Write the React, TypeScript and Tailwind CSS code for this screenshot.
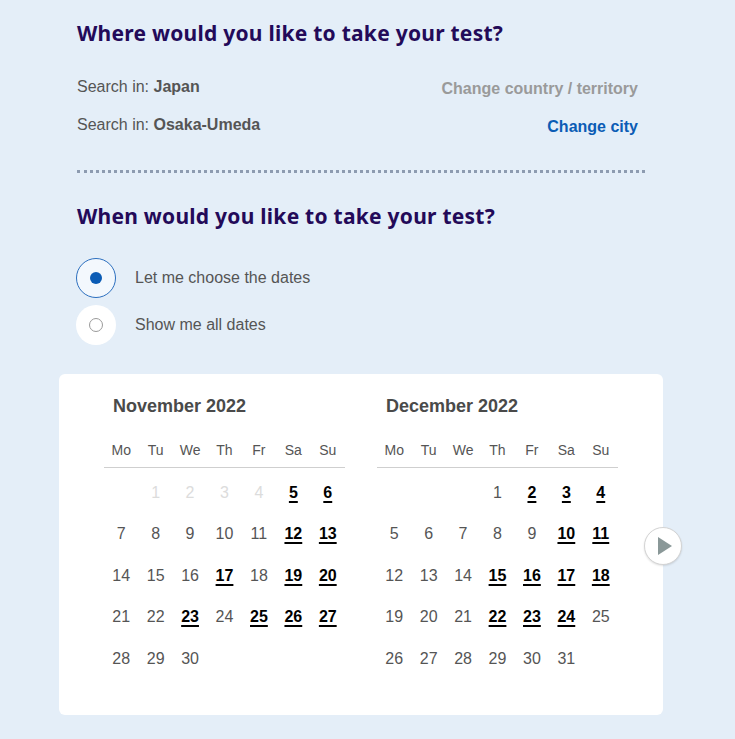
import React from "react";

type Day = { d: number; kind: "off" | "normal" | "open" };

const HEAD = ["Mo", "Tu", "We", "Th", "Fr", "Sa", "Su"];

function buildMonth(lead: number, total: number, open: number[], off: number[]): (Day | null)[] {
  const cells: (Day | null)[] = [];
  for (let i = 0; i < lead; i++) cells.push(null);
  for (let d = 1; d <= total; d++) {
    cells.push({ d, kind: off.includes(d) ? "off" : open.includes(d) ? "open" : "normal" });
  }
  while (cells.length % 7) cells.push(null);
  return cells;
}

const MONTHS = [
  {
    title: "November 2022",
    cells: buildMonth(1, 30, [5, 6, 12, 13, 17, 19, 20, 23, 25, 26, 27], [1, 2, 3, 4]),
  },
  {
    title: "December 2022",
    cells: buildMonth(3, 31, [2, 3, 4, 10, 11, 15, 16, 17, 18, 22, 23, 24], []),
  },
];

function Month({ title, cells }: { title: string; cells: (Day | null)[] }) {
  const rows: (Day | null)[][] = [];
  for (let i = 0; i < cells.length; i += 7) rows.push(cells.slice(i, i + 7));
  return (
    <div className="w-[241px]">
      <h3 className="ml-[9px] text-[18px] font-bold leading-6 text-[#4a4a4a]">{title}</h3>
      <div className="mt-[22px] grid grid-cols-7 border-b border-[#cfcfcf] pb-[7px]">
        {HEAD.map((h) => (
          <span key={h} className="text-center text-[14px] leading-5 text-[#555]">
            {h}
          </span>
        ))}
      </div>
      <div className="mt-[4px]">
        {rows.map((r, i) => (
          <div key={i} className="grid h-[41.5px] grid-cols-7 items-center">
            {r.map((c, j) =>
              c === null ? (
                <span key={j} />
              ) : c.kind === "open" ? (
                <a
                  key={j}
                  className="text-center text-[16px] font-bold text-black underline decoration-2 underline-offset-[3px]"
                >
                  {c.d}
                </a>
              ) : (
                <span
                  key={j}
                  className={
                    c.kind === "off"
                      ? "text-center text-[16px] text-[#dcdcdc]"
                      : "text-center text-[16px] text-[#555]"
                  }
                >
                  {c.d}
                </span>
              )
            )}
          </div>
        ))}
      </div>
    </div>
  );
}

export default function App() {
  return (
    <div className="min-h-[739px] bg-[#e4eef8] pl-[59px] font-['Liberation_Sans',Arial,sans-serif]">
      <div className="w-[604px]">
        <div className="px-[18px]">
          <h2 className="pt-[19px] font-['Noto_Sans',sans-serif] text-[21px] font-bold leading-7 tracking-[0.25px] text-[#230a59]">
            Where would you like to take your test?
          </h2>
          <div className="mt-[28px] flex h-[38px] justify-between pr-[7px] text-[16px] leading-6">
            <span className="text-[#555]">
              Search in: <b>Japan</b>
            </span>
            <a className="mt-[2px] font-bold text-[#9a9a9a]">Change country / territory</a>
          </div>
          <div className="flex h-[24px] justify-between pr-[7px] text-[16px] leading-6">
            <span className="text-[#555]">
              Search in: <b>Osaka-Umeda</b>
            </span>
            <a className="mt-[2px] font-bold text-[#0b5cb5]">Change city</a>
          </div>
          <div className="mt-[33px] border-t-[3px] border-dotted border-[#8d9bb0]" />
          <h2 className="mt-[29px] font-['Noto_Sans',sans-serif] text-[21px] font-bold leading-7 tracking-[0.25px] text-[#230a59]">
            When would you like to take your test?
          </h2>
          <div className="-ml-px mt-[28px] flex flex-col gap-[7px] text-[16px] text-[#555]">
            <label className="flex items-center gap-[19px]">
              <span className="flex h-10 w-10 items-center justify-center rounded-full border border-[#2c6fbf] bg-[#f3f8fd]">
                <span className="h-3 w-3 rounded-full bg-[#0b5cb5]" />
              </span>
              Let me choose the dates
            </label>
            <label className="flex items-center gap-[19px]">
              <span className="flex h-10 w-10 items-center justify-center rounded-full bg-white">
                <span className="h-[14px] w-[14px] rounded-full border border-[#9a9a9a]" />
              </span>
              Show me all dates
            </label>
          </div>
        </div>

        <div className="relative mt-[29px] flex gap-[32px] rounded-md bg-white pb-[35px] pl-[45px] pt-[20px]">
          {MONTHS.map((m) => (
            <Month key={m.title} title={m.title} cells={m.cells} />
          ))}
          <button className="absolute right-[-19px] top-[153px] flex h-[38px] w-[38px] items-center justify-center rounded-full border-[1.5px] border-[#d4d4d4] bg-white shadow-[0_1px_2px_rgba(0,0,0,0.12)]">
            <svg width="16" height="20" viewBox="0 0 16 20" className="ml-[3px]">
              <path d="M1 1 L15 10 L1 19 Z" fill="#8a9898" />
            </svg>
          </button>
        </div>
      </div>
    </div>
  );
}
